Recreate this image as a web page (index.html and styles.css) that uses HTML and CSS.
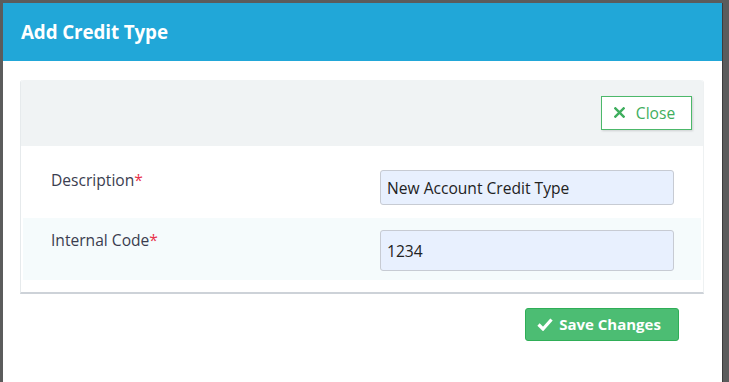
FILE: index.html
```html
<!DOCTYPE html>
<html>
<head>
<meta charset="utf-8">
<link rel="stylesheet" href="styles.css">
</head>
<body>
<div class="backdrop">
  <div class="modal">
    <div class="modal-header">
      <h1 class="modal-title">Add Credit Type</h1>
    </div>
    <div class="modal-body">
      <div class="panel">
        <div class="panel-head">
          <button class="btn-close" type="button">
            <svg class="ico-x" viewBox="0 0 12 12" width="11" height="11"><path d="M1.5 1.5 L10.5 10.5 M10.5 1.5 L1.5 10.5" stroke="currentColor" stroke-width="2.6" stroke-linecap="square"/></svg>
            <span>Close</span>
          </button>
        </div>
        <div class="panel-rows">
          <div class="form-row row-first">
            <label class="form-label">Description<span class="req">*</span></label>
            <input class="form-input input-a" type="text" value="New Account Credit Type">
          </div>
          <div class="form-row row-alt">
            <label class="form-label">Internal Code<span class="req">*</span></label>
            <input class="form-input input-b" type="text" value="1234">
          </div>
        </div>
      </div>
      <div class="modal-footer">
        <button class="btn-save" type="button">
          <svg class="ico-check" viewBox="0 0 16 14" width="16" height="14"><path d="M1.5 7.5 L6 12 L14.5 2.5" fill="none" stroke="currentColor" stroke-width="3.2" stroke-linejoin="miter"/></svg>
          <span>Save Changes</span>
        </button>
      </div>
    </div>
  </div>
</div>
</body>
</html>
```

FILE: styles.css
```css
* { box-sizing: border-box; }
html, body { margin: 0; padding: 0; }
body {
  background: #5b5c5c;
  font-family: "Open Sans", "Noto Sans", sans-serif;
  width: 729px;
  height: 382px;
  overflow: hidden;
}
.backdrop {
  padding: 3px 0 0 3px;
}
.modal {
  width: 720px;
  height: 379px;
  background: #ffffff;
  border-right: 1px solid #3c3c3c;
}
.modal-header {
  background: #21a7d8;
  height: 58px;
  display: flex;
  align-items: center;
  padding-left: 18px;
}
.modal-title {
  margin: 0;
  color: #ffffff;
  font-size: 18.8px;
  font-weight: 700;
  letter-spacing: -0.1px;
}
.modal-body {
  padding: 19px 18px 0 17px;
}
.panel {
  width: 684px;
  border-left: 1px solid #e6eaec;
  border-right: 1px solid #eef1f2;
  border-bottom: 2px solid #cdd2d8;
  border-radius: 3px 3px 0 0;
  background: #ffffff;
}
.panel-head {
  background: #f0f3f4;
  height: 66px;
  display: flex;
  justify-content: flex-end;
  align-items: flex-start;
  padding: 16px 11px 0 0;
  border-radius: 3px 3px 0 0;
}
.btn-close {
  width: 91px;
  height: 34px;
  background: #ffffff;
  border: 1px solid #4cb86a;
  color: #3fae5e;
  font-family: "Open Sans", "Noto Sans", sans-serif;
  font-size: 15.6px;
  display: flex;
  align-items: center;
  justify-content: center;
  gap: 11px;
  padding: 0 4px 1px 0;
  box-shadow: 1px 1px 2px rgba(0,0,0,0.15);
}
.ico-x { display: block; }
.panel-rows {
  padding: 0 2px 12px 2px;
}
.form-row {
  display: flex;
  justify-content: space-between;
  padding-left: 28px;
  padding-right: 27px;
}
.row-first {
  height: 72px;
  padding-top: 24px;
  background: #ffffff;
}
.row-alt {
  height: 62px;
  padding-top: 12px;
  background: #f5fbfc;
}
.form-label {
  color: #3a3d4f;
  font-size: 15.6px;
  line-height: 20px;
  padding-top: 0;
}
.req { color: #e8334a; }
.form-input {
  width: 294px;
  background: #e8f0fe;
  border: 1px solid #c7cbd3;
  border-radius: 3px;
  font-family: "Open Sans", "Noto Sans", sans-serif;
  font-size: 15.6px;
  color: #222222;
  padding: 0 6px;
  margin: 0;
}
.input-a { height: 35px; }
.input-b { height: 41px; }
.modal-footer {
  display: flex;
  justify-content: flex-end;
  padding: 14px 25px 0 0;
}
.btn-save {
  width: 154px;
  height: 33px;
  background: #4cbd73;
  border: 1px solid #2fae57;
  border-radius: 3px;
  color: #ffffff;
  font-family: "Open Sans", "Noto Sans", sans-serif;
  font-size: 15px;
  font-weight: 700;
  display: flex;
  align-items: center;
  justify-content: center;
  gap: 6px;
  padding: 0 6px 1px 0;
}
.ico-check { display: block; }
```
